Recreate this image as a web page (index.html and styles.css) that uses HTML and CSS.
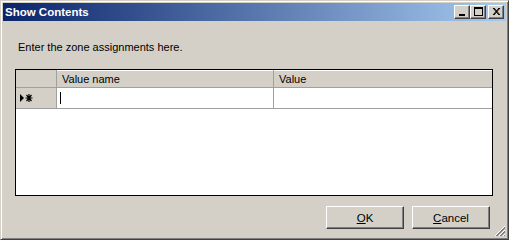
FILE: index.html
```html
<!DOCTYPE html>
<html lang="en">
<head>
    <meta charset="UTF-8">
    <title>Show Contents</title>
    <link rel="stylesheet" href="styles.css">
</head>
<body>
    <div class="window">
        <div class="title-bar">
            <span class="title">Show Contents</span>
            <div class="title-buttons">
                <span class="tb-btn">
                    <svg width="14" height="12" viewBox="0 0 14 12"><rect x="4" y="8" width="6" height="2" fill="#000"/></svg>
                </span>
                <span class="tb-btn">
                    <svg width="14" height="12" viewBox="0 0 14 12"><rect x="3.5" y="1.5" width="8" height="8" fill="none" stroke="#000"/><rect x="3" y="1" width="9" height="2" fill="#000"/></svg>
                </span>
                <span class="tb-btn tb-close">
                    <svg width="14" height="12" viewBox="0 0 14 12"><path d="M4 2 L10 9 M10 2 L4 9 M5 2 L11 9 M11 2 L5 9" stroke="#000" stroke-width="1"/></svg>
                </span>
            </div>
        </div>

        <div class="dialog-body">
            <p class="prompt">Enter the zone assignments here.</p>

            <div class="grid">
                <div class="grid-row grid-header">
                    <div class="row-head"></div>
                    <div class="cell col-name">Value name</div>
                    <div class="cell col-value">Value</div>
                </div>
                <div class="grid-row grid-data">
                    <div class="row-head">
                        <svg width="14" height="8" viewBox="0 0 14 8"><path d="M0 0 L4 4 L0 8 Z" fill="#000"/><path d="M9 0 V8 M5.5 4 H12.5 M6.5 1 L11.5 7 M11.5 1 L6.5 7" stroke="#000" stroke-width="1.2"/></svg>
                    </div>
                    <div class="cell col-name"><span class="caret"></span></div>
                    <div class="cell col-value"></div>
                </div>
            </div>

            <div class="button-row">
                <button class="btn"><u>O</u>K</button>
                <button class="btn"><u>C</u>ancel</button>
            </div>
        </div>

        <svg class="grip" width="12" height="12" viewBox="0 0 12 12">
            <path d="M11 1 L1 11 M11 5 L5 11 M11 9 L9 11" stroke="#fff" stroke-width="1"/>
            <path d="M11 2 L2 11 M11 3 L3 11 M11 6 L6 11 M11 7 L7 11 M11 10 L10 11" stroke="#808080" stroke-width="1"/>
        </svg>
    </div>
</body>
</html>
```

FILE: styles.css
```css
body {
    margin: 0;
    font-family: 'Liberation Sans', Arial, sans-serif;
    font-size: 11px;
    color: #000;
}

.window {
    position: relative;
    width: 509px;
    height: 240px;
    box-sizing: border-box;
    background: #d4d0c8;
    border: 1px solid;
    border-color: #d4d0c8 #404040 #404040 #d4d0c8;
    box-shadow: inset 1px 1px #fff, inset -1px -1px #808080;
    padding: 2px;
    display: flex;
    flex-direction: column;
}

.title-bar {
    height: 18px;
    display: flex;
    align-items: center;
    justify-content: space-between;
    background: linear-gradient(to right, #0a246a, #a6caf0);
    padding: 0 2px 0 2px;
}

.title {
    color: #fff;
    font-weight: bold;
    font-size: 11.5px;
}

.title-buttons {
    display: flex;
}

.tb-btn {
    width: 16px;
    height: 14px;
    box-sizing: border-box;
    background: #d4d0c8;
    border: 1px solid;
    border-color: #fff #404040 #404040 #fff;
    box-shadow: inset -1px -1px #808080;
    display: flex;
}

.tb-close {
    margin-left: 2px;
}

.dialog-body {
    flex: 1;
    display: flex;
    flex-direction: column;
    padding: 0 13px 0 12px;
}

.prompt {
    margin: 19px 0 0 3px;
    line-height: 14px;
}

.grid {
    margin-top: 15px;
    height: 127px;
    box-sizing: border-box;
    background: #fff;
    border: 1px solid #000;
}

.grid-row {
    display: flex;
}

.grid-header {
    height: 18px;
    background: #d4d0c8;
    box-shadow: inset 0 1px #fff;
}

.grid-data {
    height: 21px;
}

.row-head {
    width: 41px;
    box-sizing: border-box;
    background: #d4d0c8;
    border-right: 1px solid #a0a0a0;
    border-bottom: 1px solid #a0a0a0;
    display: flex;
    align-items: center;
    padding-left: 4px;
}

.cell {
    box-sizing: border-box;
    border-right: 1px solid #a0a0a0;
    border-bottom: 1px solid #a0a0a0;
    padding-left: 5px;
    display: flex;
    align-items: center;
}

.col-name {
    width: 217px;
}

.col-value {
    flex: 1;
    border-right: none;
}

.caret {
    display: block;
    width: 1px;
    height: 12px;
    margin-left: -2px;
    background: #000;
}

.button-row {
    display: flex;
    justify-content: flex-end;
    gap: 8px;
    margin: 10px 3px 0 0;
}

.btn {
    width: 78px;
    height: 23px;
    box-sizing: border-box;
    font-family: 'Liberation Sans', Arial, sans-serif;
    font-size: 11.5px;
    color: #000;
    background: #d4d0c8;
    border: 1px solid;
    border-color: #fff #404040 #404040 #fff;
    box-shadow: inset -1px -1px #808080;
    padding: 0;
}

.grip {
    position: absolute;
    right: 2px;
    bottom: 2px;
}
```
